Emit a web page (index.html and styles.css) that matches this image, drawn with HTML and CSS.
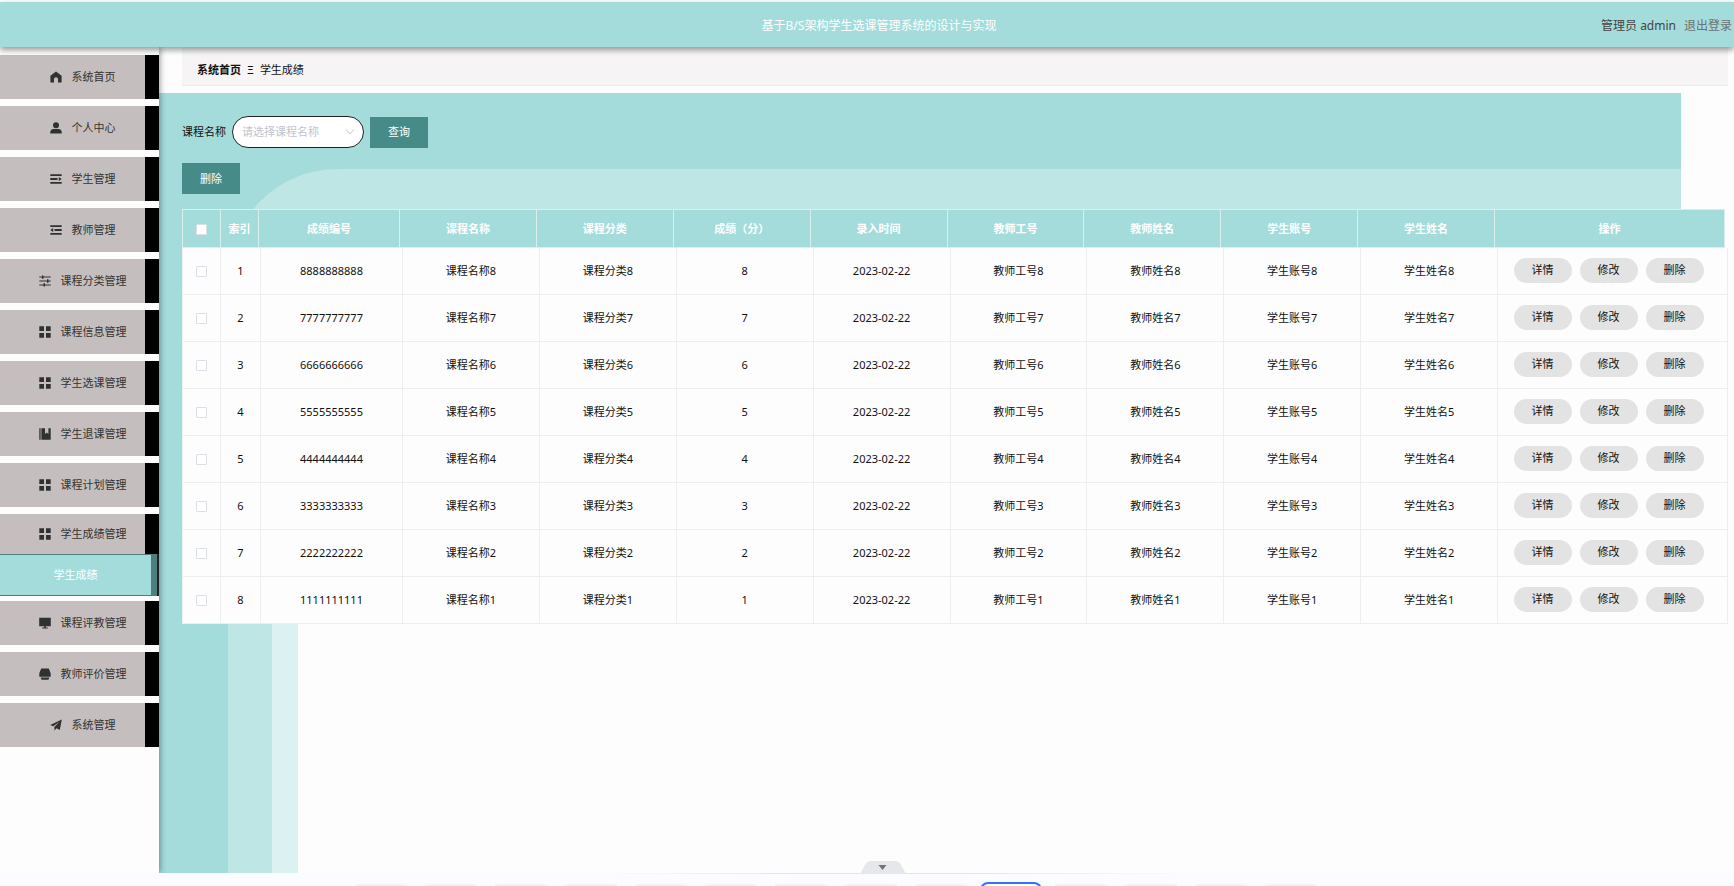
FILE: index.html
```html
<!DOCTYPE html>
<html lang="zh-CN">
<head>
<meta charset="utf-8">
<title>基于B/S架构学生选课管理系统的设计与实现</title>
<link rel="stylesheet" href="styles.css">
</head>
<body>
<svg class="sprite" aria-hidden="true">
  <symbol id="i-home" viewBox="0 0 12 12"><path d="M6 .4 11.600 4.800v6.700H8V8.200a2 2 0 0 0-4 0v3.300H.4V4.800z"/></symbol>
  <symbol id="i-user" viewBox="0 0 12 12"><circle cx="6" cy="3.200" r="3"/><path d="M.2 11.600C.2 8 1.600 7.100 4 7.100h4c2.400 0 3.800.9 3.800 4.500z"/></symbol>
  <symbol id="i-unfold" viewBox="0 0 12 12"><path d="M.3 1.200h11.400v1.800H.3zM.3 5.100h7.200v1.800H.3zM.3 9h11.400v1.800H.3zM8.800 4 11.700 6 8.800 8z"/></symbol>
  <symbol id="i-fold" viewBox="0 0 12 12"><path d="M.3 1.200h11.400v1.800H.3zM4.500 5.100h7.200v1.800H4.500zM.3 9h11.400v1.800H.3zM3.200 4 .3 6l2.900 2z"/></symbol>
  <symbol id="i-sliders" viewBox="0 0 12 12"><path d="M.3 1.600h11.400v1H.3zM.3 5.500h11.400v1H.3zM.3 9.400h11.400v1H.3zM3 .4h1.500v3.400H3zM8 4.300h1.500v3.400H8zM4.500 8.200H6v3.400H4.500z"/></symbol>
  <symbol id="i-grid" viewBox="0 0 12 12"><path d="M.3.300h4.700V5H.3zM7 .3h4.700V5H7zM.3 7h4.700v4.700H.3zM7 7h4.700v4.700H7z"/></symbol>
  <symbol id="i-book" viewBox="0 0 12 12"><path d="M.3.300h1.300v11.400H.3zM2.400.3h3.600v5.800l1.700-1.500 1.700 1.500V.3h2.300v11.400H2.400z"/></symbol>
  <symbol id="i-monitor" viewBox="0 0 12 12"><path d="M.2.800h11.600v8.400H.2zM5.200 9h1.600v1.500h2v1H3.200v-1h2z"/></symbol>
  <symbol id="i-printer" viewBox="0 0 12 12"><path d="M2.200.6h7.600l1.900 4.600v3.600H.3V5.200zM1.800 9.400h8.400v.9l-.9 1.400H2.700l-.9-1.400z"/></symbol>
  <symbol id="i-plane" viewBox="0 0 12 12"><path d="M11.800.5 9.800 11 6.500 9.200 4.600 11.600 4.300 8 9.600 2.800 3.200 7.300.2 5.900z"/></symbol>
</svg>

<header class="topbar">
  <h1 class="topbar-title">基于B/S架构学生选课管理系统的设计与实现</h1>
  <div class="topbar-user"><span>管理员 admin</span><a class="logout" href="#">退出登录</a></div>
</header>

<div class="shell">
  <nav class="sidebar">
    <ul class="menu" id="menu"></ul>
  </nav>

  <main class="main">
    <nav class="crumbs"><b>系统首页</b><span>Ξ</span><span>学生成绩</span></nav>
    <section class="panel">
      <div class="backdrop"></div>
      <form class="filters">
        <label for="course">课程名称</label>
        <span class="select-wrap">
          <select id="course" class="select"><option>请选择课程名称</option></select>
          <svg class="chevron" viewBox="0 0 10 6"><path d="M1 .5 5 5 9 .5"/></svg>
        </span>
        <button type="button" class="btn">查询</button>
      </form>
      <div class="actions"><button type="button" class="btn">删除</button></div>
      <div class="tables">
        <table class="grid grid-head">
          <colgroup><col class="c-check"><col class="c-index"><col class="c-code"><col span="8"><col class="c-ops"></colgroup>
          <thead><tr>
            <th><input type="checkbox" class="check" aria-label="全选"></th>
            <th>索引</th><th>成绩编号</th><th>课程名称</th><th>课程分类</th><th>成绩（分）</th><th>录入时间</th><th>教师工号</th><th>教师姓名</th><th>学生账号</th><th>学生姓名</th><th>操作</th>
          </tr></thead>
        </table>
        <table class="grid grid-body">
          <colgroup><col class="c-check"><col class="c-index"><col class="c-code"><col span="8"><col class="c-ops"></colgroup>
          <tbody id="rows"></tbody>
        </table>
      </div>
    </section>
  </main>
</div>

<footer class="dock">
  <button type="button" class="dock-toggle" aria-label="收起"><svg viewBox="0 0 46 13"><path class="tab" d="M0 13 5 4Q7 0 11 0h24q4 0 6 4l5 9z"/><path class="arrow" d="M18.500 4h8l-4 5z"/></svg></button>
  <div class="dock-items" id="dock"></div>
</footer>
<script src="app.js"></script>
</body>
</html>
```

FILE: styles.css
```css
* { box-sizing: border-box; }

body {
  margin: 0;
  padding-top: 2px;
  min-height: 100vh;
  display: flex;
  flex-direction: column;
  overflow: hidden;
  background: #fdfdfd;
  color: #111;
  font: 11px/16px "Noto Sans", "Noto Sans CJK SC", sans-serif;
}

button, select { font: inherit; }
.sprite { position: absolute; width: 0; height: 0; }

.topbar {
  position: relative;
  z-index: 3;
  display: grid;
  grid-template-columns: 1fr auto 1fr;
  align-items: center;
  height: 45px;
  padding: 2px 2px 0 26px;
  background: #a4dcdb;
  box-shadow: 0 3px 6px rgba(0, 0, 0, .4);
  font-size: 12px;
}
.topbar-title {
  grid-column: 2;
  margin: 0;
  font-size: 12px;
  font-weight: 400;
  color: #fff;
}
.topbar-user {
  display: flex;
  justify-content: flex-end;
  gap: 8px;
  color: #444;
}
.logout { color: #6b7373; text-decoration: none; }

.shell { flex: 1; display: flex; }

.sidebar {
  position: relative;
  z-index: 2;
  width: 159px;
  flex: none;
  padding-top: 8px;
  background: #fdfdfd;
  box-shadow: 1px 0 6px rgba(0, 0, 0, .4);
}
.menu { margin: 0; padding: 0; list-style: none; }
.menu-item { margin-bottom: 7px; }
.menu-link {
  display: flex;
  align-items: center;
  justify-content: center;
  gap: 10px;
  height: 44px;
  padding: 0 0 0 20px;
  border-right: 14px solid #000;
  background: #c4bfbe;
  color: #333;
  text-decoration: none;
}
.menu-link svg { width: 12px; height: 12px; fill: #303133; }
.menu-item.open { margin-bottom: 5px; }
.menu-item.open .menu-link { height: 40px; }
.submenu-link {
  display: block;
  margin-right: 2px;
  padding: 12px 0;
  border: solid #4c7f7e;
  border-width: 1px 6px 1px 0;
  box-shadow: 2px 0 0 #222;
  background: #a4dcdb;
  color: #fff;
  text-align: center;
  text-decoration: none;
}

.main { flex: 1; min-width: 0; display: flex; flex-direction: column; }
.crumbs {
  display: flex;
  align-items: center;
  gap: 6px;
  height: 39px;
  margin: 0 6px 7px 23px;
  padding: 8px 15px 0;
  background: #f6f4f5;
  border-bottom: 1px solid #ebebeb;
}

.panel {
  position: relative;
  flex: 1;
  padding: 23px 6px 0 23px;
}
/* stepped bands behind the list */
.backdrop {
  position: absolute;
  inset: 0 53px 0 0;
  overflow: hidden;
  background: #a4dcdb;
}
.backdrop::before {
  content: "";
  position: absolute;
  inset: 76px 0 0 69px;
  border-radius: 110px 0 0 0;
  background: linear-gradient(90deg, transparent 44px, #dcf1f2 44px, #dcf1f2 70px, #fdfdfd 70px) 0 76px no-repeat, #bee6e5;
}
.filters, .actions, .tables { position: relative; }
.filters { display: flex; align-items: center; gap: 6px; }
.select-wrap { position: relative; }
.select {
  display: block;
  appearance: none;
  width: 132px;
  height: 32px;
  padding: 0 28px 0 9px;
  border: 1px solid #222;
  border-radius: 16px;
  background: #fff;
  color: #c0c4cc;
}
.chevron {
  position: absolute;
  right: 9px;
  top: 13px;
  width: 10px;
  height: 6px;
  fill: none;
  stroke: #c0c4cc;
  pointer-events: none;
}
.btn {
  width: 58px;
  height: 31px;
  padding: 0;
  border: 0;
  background: #478b89;
  color: #fff;
}
.actions { display: flex; margin: 15px 0; }

.grid {
  width: 100%;
  table-layout: fixed;
  border-collapse: separate;
  border-spacing: 0;
  text-align: center;
}
.grid th, .grid td { padding: 0; border: solid #eee; border-width: 0 1px 1px 0; }
.grid tr > :first-child { border-left-width: 1px; }
.grid-head { width: calc(100% - 3px); }
.grid-head th { height: 39px; border-top-width: 1px; border-color: #d9efef; background: #a4dcdb; color: #fff; }
.grid-body td { height: 47px; background: #fdfdfd; }
.c-check { width: 39px; }
.c-index { width: 40px; }
.c-code { width: 142px; }
.grid-head .c-index { width: 38px; }
.grid-head .c-code { width: 141px; }
.c-ops { width: 230px; }
.check {
  appearance: none;
  display: block;
  width: 11px;
  height: 11px;
  margin: 1px auto 0;
  border: 1px solid #dcdfe6;
  border-radius: 1px;
  background: #fff;
}
.ops { display: flex; justify-content: center; gap: 8px; padding: 0 8px 2px 0; }
.pill {
  width: 58px;
  height: 25px;
  padding: 0;
  border: 0;
  border-radius: 13px;
  background: #e3e3e3;
  color: #111;
}

.dock {
  position: relative;
  z-index: 4;
  height: 13px;
  padding-top: 9px;
  background: linear-gradient(90deg, transparent 600px, #e3e4e8 800px, #e3e4e8 960px, transparent 1200px) 0 0 / 100% 1px no-repeat, #fafcff;
}
.dock-toggle {
  position: absolute;
  left: 860px;
  bottom: 12px;
  width: 46px;
  height: 13px;
  padding: 0;
  border: 0;
  background: none;
}
.dock-toggle svg { display: block; }
.tab { fill: #e6e7eb; }
.arrow { fill: #6b7380; }
.dock-items { display: flex; gap: 14px; height: 4px; padding-left: 353px; overflow: hidden; }
.thumb { flex: none; width: 56px; height: 20px; margin-top: 2px; border-radius: 6px; background: #f0f1f4; }
.thumb.active { width: 62px; margin: 0 -3px; border: 2px solid #2f74ff; border-radius: 8px; background: #fff; }
```

FILE: app.js
```js
const items = [
  ["home", "系统首页"], ["user", "个人中心"], ["unfold", "学生管理"], ["fold", "教师管理"],
  ["sliders", "课程分类管理"], ["grid", "课程信息管理"], ["grid", "学生选课管理"], ["book", "学生退课管理"],
  ["grid", "课程计划管理"], ["grid", "学生成绩管理", "学生成绩"], ["monitor", "课程评教管理"],
  ["printer", "教师评价管理"], ["plane", "系统管理"]
];
document.getElementById("menu").innerHTML = items.map(([icon, text, sub]) =>
  `<li class="menu-item${sub ? " open" : ""}"><a class="menu-link" href="#"><svg><use href="#i-${icon}"/></svg>${text}</a>` +
  (sub ? `<a class="submenu-link" href="#">${sub}</a>` : "") + "</li>").join("");

document.getElementById("rows").innerHTML = [8, 7, 6, 5, 4, 3, 2, 1].map((n, i) => {
  const cells = [i + 1, String(n).repeat(10), "课程名称" + n, "课程分类" + n, n, "2023-02-22",
    "教师工号" + n, "教师姓名" + n, "学生账号" + n, "学生姓名" + n];
  return `<tr><td><input type="checkbox" class="check" aria-label="选择第${i + 1}行"></td>` +
    cells.map(c => `<td>${c}</td>`).join("") +
    '<td><div class="ops"><button type="button" class="pill">详情</button><button type="button" class="pill">修改</button><button type="button" class="pill">删除</button></div></td></tr>';
}).join("");

document.getElementById("dock").innerHTML = Array.from({ length: 14 }, (_, i) =>
  `<div class="thumb${i === 9 ? " active" : ""}"></div>`).join("");
```
